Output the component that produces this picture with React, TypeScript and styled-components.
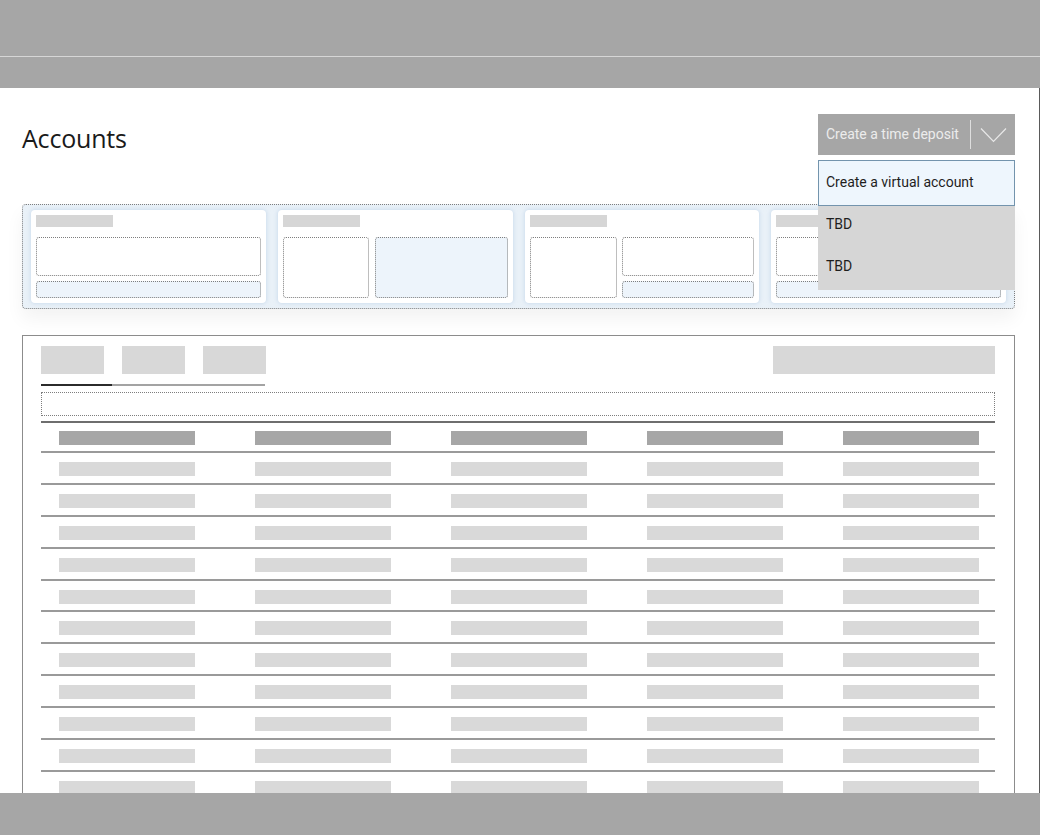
import styled, { createGlobalStyle } from "styled-components";

const GlobalStyle = createGlobalStyle`
  html, body {
    margin: 0;
    padding: 0;
    height: 100%;
    overflow: hidden;
    background: #ffffff;
    font-family: Roboto, "Liberation Sans", Arial, sans-serif;
  }
  #root {
    height: 100%;
  }
  * {
    box-sizing: border-box;
  }
`;

const Shell = styled.div`
  height: 100vh;
  display: flex;
  flex-direction: column;
`;

const TopBar = styled.header`
  height: 57px;
  flex-shrink: 0;
  background: #a6a6a6;
  border-bottom: 1px solid #d6d6d6;
`;

const SubBar = styled.nav`
  height: 31px;
  flex-shrink: 0;
  background: #a6a6a6;
`;

const Main = styled.main`
  flex: 1;
  min-height: 0;
  overflow: hidden;
  padding: 0 24px 0 22px;
  border-right: 1px solid #5a5a5a;
`;

const Footer = styled.footer`
  height: 42px;
  flex-shrink: 0;
  background: #a6a6a6;
`;

const HeaderRow = styled.div`
  display: flex;
  justify-content: space-between;
  align-items: center;
  padding-top: 25px;
`;

const Title = styled.h1`
  margin: 8px 0 0;
  font-family: "Open Sans", "Liberation Sans", sans-serif;
  font-size: 25px;
  font-weight: 400;
  color: #1a1a1a;
  letter-spacing: -0.2px;
`;

const Dropdown = styled.div`
  position: relative;
  width: 197px;
`;

const DropButton = styled.button`
  width: 100%;
  height: 41px;
  display: flex;
  align-items: center;
  padding: 0 0 0 8px;
  border: none;
  background: #a6a6a6;
  color: #ececec;
  font-family: Roboto, "Liberation Sans", sans-serif;
  font-size: 14px;
  cursor: pointer;
`;

const DropLabel = styled.span`
  flex: 1;
  text-align: left;
`;

const DropDivider = styled.span`
  width: 1px;
  height: 29px;
  background: #dedede;
`;

const Chevron = styled.span`
  width: 44px;
  display: flex;
  justify-content: center;
  padding-top: 2px;
`;

const Menu = styled.ul`
  position: absolute;
  top: 46px;
  left: 0;
  width: 197px;
  margin: 0;
  padding: 0;
  list-style: none;
  background: #d6d6d6;
  z-index: 5;
`;

const MenuItem = styled.li<{ $active?: boolean }>`
  height: ${(p) => (p.$active ? "46px" : "42px")};
  display: flex;
  align-items: center;
  padding: ${(p) => (p.$active ? "0 0 2px 7px" : "0 0 5px 8px")};
  font-size: 14px;
  color: #1e1e1e;
  background: ${(p) => (p.$active ? "#eef6fd" : "transparent")};
  border: ${(p) => (p.$active ? "1px solid #7394ad" : "none")};
`;

const CardStrip = styled.section`
  margin-top: 49px;
  height: 105px;
  display: grid;
  grid-template-columns: repeat(4, 1fr);
  gap: 12px;
  padding: 5px 8px;
  border: 1px dotted #7e7e7e;
  border-radius: 4px;
  background: #e9f1f8;
  box-shadow: 0 10px 18px rgba(0, 0, 0, 0.05);
`;

const Card = styled.div`
  background: #ffffff;
  border-radius: 4px;
  padding: 5px;
  box-shadow: 0 0 4px rgba(160, 190, 220, 0.55);
  display: flex;
  flex-direction: column;
`;

const CardLabel = styled.div`
  width: 77px;
  height: 12px;
  background: #d6d6d6;
`;

const CardBody = styled.div<{ $cols: string; $gap?: number }>`
  margin-top: 10px;
  height: 61px;
  display: grid;
  grid-template-columns: ${(p) => p.$cols};
  gap: ${(p) => p.$gap ?? 6}px;
`;

const Stack = styled.div`
  display: grid;
  grid-template-rows: 39px 17px;
  gap: 5px;
`;

const Slot = styled.div<{ $tint?: boolean }>`
  border: 1px dotted #7e7e7e;
  border-radius: 3px;
  background: ${(p) => (p.$tint ? "#edf4fb" : "#ffffff")};
`;

const TablePanel = styled.section`
  margin-top: 26px;
  border: 1px solid #8c8c8c;
  border-bottom: none;
  padding: 10px 19px 0 18px;
  min-height: 600px;
`;

const TabsRow = styled.div`
  display: flex;
  justify-content: space-between;
`;

const Tabs = styled.div`
  display: flex;
  gap: 18px;
`;

const Tab = styled.div`
  width: 63px;
  height: 28px;
  background: #d8d8d8;
`;

const Action = styled.div`
  width: 222px;
  height: 28px;
  background: #d8d8d8;
`;

const TabTrack = styled.div`
  margin-top: 10px;
  width: 224px;
  height: 2px;
  background: #a3a3a3;
`;

const TabActive = styled.div`
  width: 71px;
  height: 2px;
  background: #2b2b2b;
`;

const Search = styled.div`
  margin-top: 6px;
  height: 24px;
  border: 1px dotted #7e7e7e;
`;

const Table = styled.div`
  margin-top: 5px;
  border-top: 2px solid #6e6e6e;
`;

const Row = styled.div<{ $head?: boolean }>`
  height: ${(p) => (p.$head ? "30px" : "31.9px")};
  display: grid;
  grid-template-columns: repeat(5, 136px);
  column-gap: 60px;
  padding: ${(p) => (p.$head ? "8px 0 0 18px" : "9px 0 0 18px")};
  border-bottom: 2px solid #9a9a9a;
`;

const Cell = styled.div<{ $head?: boolean }>`
  height: 14px;
  background: ${(p) => (p.$head ? "#a6a6a6" : "#d9d9d9")};
`;

function ChevronIcon() {
  return (
    <svg width="27" height="16" viewBox="0 0 27 16" fill="none">
      <polyline points="1,1.5 13.5,14.5 26,1.5" stroke="#e8e8e8" strokeWidth="1.2" />
    </svg>
  );
}

const columns = [0, 1, 2, 3, 4];
const rows = Array.from({ length: 14 }, (_, i) => i);

export default function App() {
  return (
    <>
      <GlobalStyle />
      <Shell>
        <TopBar />
        <SubBar />
        <Main>
          <HeaderRow>
            <Title>Accounts</Title>
            <Dropdown>
              <DropButton>
                <DropLabel>Create a time deposit</DropLabel>
                <DropDivider />
                <Chevron>
                  <ChevronIcon />
                </Chevron>
              </DropButton>
              <Menu>
                <MenuItem $active>Create a virtual account</MenuItem>
                <MenuItem>TBD</MenuItem>
                <MenuItem>TBD</MenuItem>
              </Menu>
            </Dropdown>
          </HeaderRow>

          <CardStrip>
            <Card>
              <CardLabel />
              <CardBody $cols="1fr">
                <Stack>
                  <Slot />
                  <Slot $tint />
                </Stack>
              </CardBody>
            </Card>
            <Card>
              <CardLabel />
              <CardBody $cols="86px 1fr">
                <Slot />
                <Slot $tint />
              </CardBody>
            </Card>
            <Card>
              <CardLabel />
              <CardBody $cols="87px 1fr" $gap={5}>
                <Slot />
                <Stack>
                  <Slot />
                  <Slot $tint />
                </Stack>
              </CardBody>
            </Card>
            <Card>
              <CardLabel />
              <CardBody $cols="1fr">
                <Stack>
                  <Slot />
                  <Slot $tint />
                </Stack>
              </CardBody>
            </Card>
          </CardStrip>

          <TablePanel>
            <TabsRow>
              <Tabs>
                <Tab />
                <Tab />
                <Tab />
              </Tabs>
              <Action />
            </TabsRow>
            <TabTrack>
              <TabActive />
            </TabTrack>
            <Search />
            <Table>
              <Row $head>
                {columns.map((c) => (
                  <Cell key={c} $head />
                ))}
              </Row>
              {rows.map((r) => (
                <Row key={r}>
                  {columns.map((c) => (
                    <Cell key={c} />
                  ))}
                </Row>
              ))}
            </Table>
          </TablePanel>
        </Main>
        <Footer />
      </Shell>
    </>
  );
}
